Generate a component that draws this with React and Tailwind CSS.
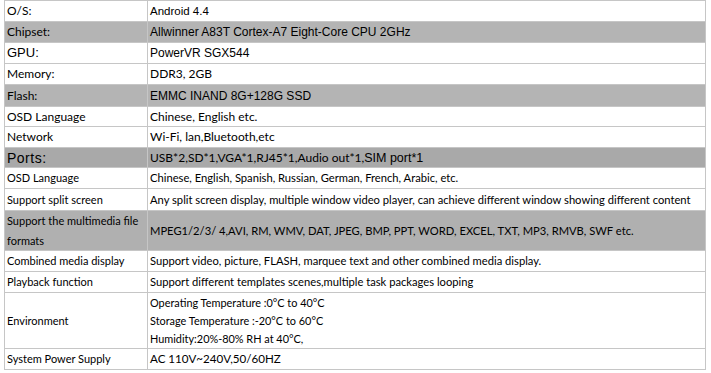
import React from 'react';

const cal = "font-['Lato','Open_Sans',sans-serif] text-[12px]";
const calS = "font-['Lato','Open_Sans',sans-serif] text-[11px]";
const calV = "font-['Lato','Open_Sans',sans-serif] text-[11.2px]";
const ari = "font-['Liberation_Sans',Arial,sans-serif] text-[12px]";

const rows = [
  { h: 'h-[21px]', label: 'O/S:', lf: cal, value: 'Android 4.4', vf: "font-['Liberation_Sans',Arial,sans-serif] text-[11.5px]" },
  { h: 'h-[21px]', label: 'Chipset:', lf: cal, value: 'Allwinner A83T Cortex-A7 Eight-Core CPU 2GHz', vf: ari, bg: 'bg-[#b4b4b4]' },
  { h: 'h-[21px]', label: 'GPU:', lf: "font-['Liberation_Sans',Arial,sans-serif] text-[13px]", value: 'PowerVR SGX544', vf: ari },
  { h: 'h-[21px]', label: 'Memory:', lf: cal, value: 'DDR3, 2GB', vf: cal },
  { h: 'h-[22px]', label: 'Flash:', lf: cal, value: 'EMMC INAND 8G+128G SSD', vf: ari, bg: 'bg-[#b4b4b4]' },
  { h: 'h-[20px]', label: 'OSD Language', lf: cal, value: 'Chinese, English etc.', vf: cal },
  { h: 'h-[21px]', label: 'Network', lf: cal, value: 'Wi-Fi, lan,Bluetooth,etc', vf: cal },
  {
    h: 'h-[20px]',
    label: 'Ports:',
    lf: "font-['Liberation_Sans',Arial,sans-serif] text-[14px] tracking-[0.5px]",
    value: (
      <>
        USB*2,SD*1,VGA*1,RJ45*1,Audio out*1,
        <span className="font-['Liberation_Sans',Arial,sans-serif] text-[12.5px]">SIM port*1</span>
      </>
    ),
    vf: cal,
    bg: 'bg-[#a9a9a9]',
  },
  { h: 'h-[21px]', label: 'OSD Language', lf: calS, value: 'Chinese, English, Spanish, Russian, German, French, Arabic, etc.', vf: calV },
  {
    h: 'h-[22px]',
    label: 'Support split screen',
    lf: calS,
    value: 'Any split screen display, multiple window video player, can achieve different window showing different content',
    vf: calV,
  },
  {
    h: 'h-[40px]',
    label: (
      <span>
        Support the multimedia file
        <br />
        formats
      </span>
    ),
    lf: calS,
    value: 'MPEG1/2/3/ 4,AVI, RM, WMV, DAT, JPEG, BMP, PPT, WORD, EXCEL, TXT, MP3, RMVB, SWF etc.',
    vf: calV,
    bg: 'bg-[#b0b0b0]',
  },
  { h: 'h-[21px]', label: 'Combined media display', lf: calS, value: 'Support video, picture, FLASH, marquee text and other combined media display.', vf: calV },
  { h: 'h-[21px]', label: 'Playback function', lf: calS, value: 'Support different templates scenes,multiple task packages looping', vf: calV },
  {
    h: 'h-[56px]',
    label: 'Environment',
    lf: calS,
    value: (
      <div className="flex flex-col leading-[18px]">
        <span>Operating Temperature :0°C to 40°C</span>
        <span>Storage Temperature :-20°C to 60°C</span>
        <span>Humidity:20%-80% RH at 40°C,</span>
      </div>
    ),
    vf: "font-['Lato','Open_Sans',sans-serif] text-[10.9px]",
  },
  { h: 'h-[20px]', label: 'System Power Supply', lf: calS, value: 'AC 110V~240V,50/60HZ', vf: "font-['Lato','Open_Sans',sans-serif] text-[11.6px]", last: true },
];

export default function App() {
  return (
    <div className="w-[711px] h-[373px] bg-white text-black">
      <div className="ml-[4px] w-[702px] border border-[#c6c6c6] flex flex-col">
        {rows.map((r, i) => (
          <div key={i} className={`flex ${r.h} ${r.last ? '' : 'border-b border-[#c6c6c6]'} ${r.bg || 'bg-white'}`}>
            <div className={`w-[143px] shrink-0 border-r border-[#c6c6c6] pl-[2px] flex items-center leading-[20px] ${r.lf}`}>
              {r.label}
            </div>
            <div className={`flex-1 pl-[2px] flex items-center leading-[20px] whitespace-nowrap ${r.vf}`}>
              {r.value}
            </div>
          </div>
        ))}
      </div>
    </div>
  );
}
